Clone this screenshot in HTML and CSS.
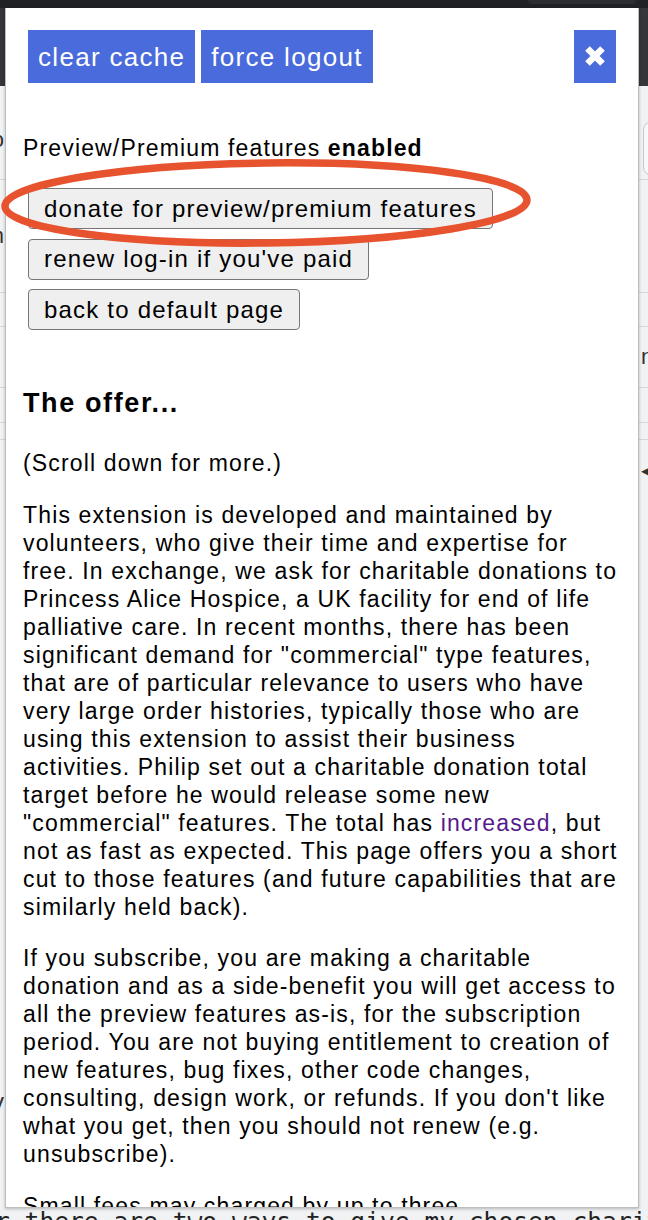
FILE: index.html
```html
<!DOCTYPE html>
<html>
<head>
<meta charset="utf-8">
<link rel="stylesheet" href="styles.css">
</head>
<body>
<div class="page">
  <div class="tabstrip"><div class="tab"></div></div>
  <div class="toolbar"></div>
  <div class="bgrows">
    <div class="bgrow r1"><span class="frag-left">Go</span><span class="inputbox"></span></div>
    <div class="bgrow r2"><span class="frag-left">on</span></div>
    <div class="bgrow r3"></div>
    <div class="bgrow r4"><span class="frag-right">n</span></div>
    <div class="bgrow r5"></div>
    <div class="bgrow r6"></div>
    <div class="bgrow r7"><span class="frag-right arrow">◀</span></div>
  </div>
  <div class="bgtext"><span class="frag-left">by</span></div>
  <div class="bgline">r there are two ways to give my chosen charity</div>
</div>

<div class="popup">
  <div class="topbar">
    <button class="tb">clear cache</button>
    <button class="tb">force logout</button>
    <button class="tb close" aria-label="close">
      <svg width="22" height="22" viewBox="0 0 22 22"><path d="M3.5 3.5L18.5 18.5M18.5 3.5L3.5 18.5" stroke="#fff" stroke-width="6.6" fill="none"/></svg>
    </button>
  </div>
  <p class="status">Preview/Premium features <b>enabled</b></p>
  <div class="actions">
    <button class="gb">donate for preview/premium features</button>
    <button class="gb">renew log-in if you've paid</button>
    <button class="gb">back to default page</button>
  </div>
  <h3 class="offer">The offer...</h3>
  <p>(Scroll down for more.)</p>
  <p>This extension is developed and maintained by volunteers, who give their time and expertise for free. In exchange, we ask for charitable donations to Princess Alice Hospice, a UK facility for end of life palliative care. In recent months, there has been significant demand for "commercial" type features, that are of particular relevance to users who have very large order histories, typically those who are using this extension to assist their business activities. Philip set out a charitable donation total target before he would release some new "commercial" features. The total has <a href="#">increased</a>, but not as fast as expected. This page offers you a short cut to those features (and future capabilities that are similarly held back).</p>
  <p>If you subscribe, you are making a charitable donation and as a side-benefit you will get access to all the preview features as-is, for the subscription period. You are not buying entitlement to creation of new features, bug fixes, other code changes, consulting, design work, or refunds. If you don't like what you get, then you should not renew (e.g. unsubscribe).</p>
  <p>Small fees may charged by up to three intermediaries: the payment processor, the donation platform and the bank.</p>
</div>

<svg class="annotation" width="548" height="110" viewBox="0 148 548 110">
  <ellipse cx="266" cy="203" rx="261" ry="40" fill="none" stroke="#e8532f" stroke-width="7.5" transform="rotate(-0.7 266 203)"/>
</svg>
</body>
</html>
```

FILE: styles.css
```css
html, body {
  margin: 0;
  padding: 0;
}

body {
  width: 648px;
  height: 1220px;
  overflow: hidden;
  position: relative;
  background: #f1f2f3;
  font-family: "Liberation Sans", Arial, sans-serif;
  color: #000;
}

/* ---------- background page ---------- */
.page {
  display: flex;
  flex-direction: column;
}

.tabstrip {
  height: 8px;
  background: #202124;
  display: flex;
  justify-content: flex-end;
}

.tab {
  width: 108px;
  height: 4px;
  margin-right: 12px;
  background: #2c2d31;
  border-radius: 0 0 8px 8px;
}

.toolbar {
  height: 78px;
  background: #35363a;
}

.bgrows {
  display: flex;
  flex-direction: column;
}

.bgrow {
  display: flex;
  align-items: center;
  border-bottom: 1px solid #d4d7db;
  font-size: 22px;
  color: #333;
}

.r1 { height: 93px; align-items: flex-end; }
.r2 { height: 112px; }
.r3 { height: 33px; }
.r4 { height: 60px; }
.r5 { height: 34px; }
.r6 { height: 16px; }
.r7 { height: 60px; border-bottom: none; }

.frag-left {
  flex: 0 0 4px;
  display: flex;
  justify-content: flex-end;
  overflow: hidden;
  white-space: nowrap;
}

.r1 .frag-left { align-self: center; margin-top: 14px; }

.frag-right {
  margin-left: auto;
  flex: 0 0 7px;
  overflow: hidden;
  white-space: nowrap;
}

.arrow {
  font-size: 16px;
}

.inputbox {
  margin-left: auto;
  margin-right: -20px;
  margin-bottom: 3px;
  width: 23px;
  height: 53px;
  border: 1px solid #c4c7cc;
  border-radius: 9px;
  background: #f7f8f9;
}

.bgtext {
  margin-top: 588px;
  height: 30px;
  display: flex;
  font-size: 24px;
  color: #333;
}

.bgline {
  margin-top: 90px;
  font-family: "DejaVu Sans Mono", monospace;
  font-size: 24.6px;
  line-height: 28px;
  white-space: nowrap;
  text-indent: -5px;
  color: #222;
}

/* ---------- popup ---------- */
.popup {
  position: absolute;
  left: 5px;
  top: 8px;
  width: 634px;
  height: 1200px;
  box-sizing: border-box;
  background: #fff;
  border: 1px solid #bdbdbd;
  border-top: none;
  box-shadow: 0 1px 3px rgba(0, 0, 0, 0.25);
  padding: 0 17px;
  overflow: hidden;
  font-size: 23px;
  line-height: 28px;
  letter-spacing: 0.05em;
}

.topbar {
  display: flex;
  gap: 6px;
  margin: 22px 5px 0;
}

.tb {
  height: 53px;
  padding: 0 10px;
  border: 0;
  background: #4a6bdb;
  color: #fff;
  font-family: "Liberation Sans", Arial, sans-serif;
  font-size: 26px;
  letter-spacing: 0.05em;
  line-height: 1;
}

.close {
  margin-left: auto;
  width: 42px;
  padding: 0;
  display: flex;
  align-items: center;
  justify-content: center;
}

.close svg {
  display: block;
  margin-top: -2px;
}

.actions {
  margin: 26px 5px 0;
  display: flex;
  flex-direction: column;
  align-items: flex-start;
  gap: 9.5px;
}

.gb {
  height: 41px;
  padding: 0 15px;
  border: 1px solid #767676;
  border-radius: 4px;
  background: #efefef;
  color: #000;
  font-family: "Liberation Sans", Arial, sans-serif;
  font-size: 24px;
  letter-spacing: 0.05em;
  line-height: 1;
}

.offer {
  margin: 58px 0 31px;
  font-size: 27px;
  line-height: 30px;
  font-weight: bold;
  letter-spacing: 0.06em;
}

.popup p {
  margin: 0 0 23.5px;
}

.popup p.status {
  margin: 51px 0 0;
}

.popup a {
  color: #551a8b;
  text-decoration: none;
}

.annotation {
  position: absolute;
  left: 0;
  top: 148px;
}
```
